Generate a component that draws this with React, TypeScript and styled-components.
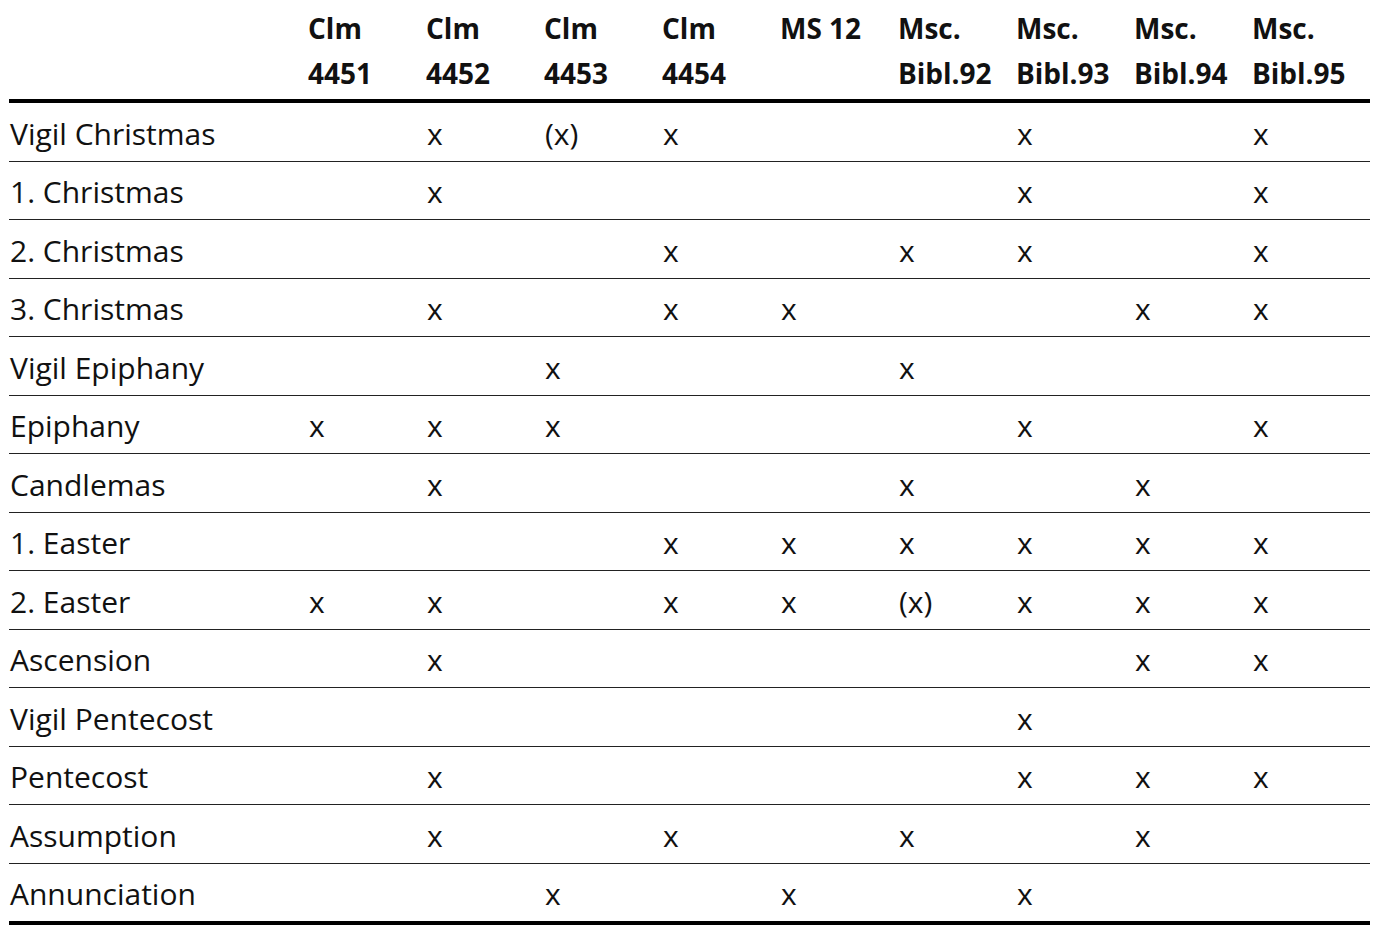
import React from "react";
import styled, { createGlobalStyle } from "styled-components";

const GlobalStyle = createGlobalStyle`
    body {
        margin: 0;
        background: #ffffff;
        color: #111111;
        font-family: "Open Sans", "Noto Sans", sans-serif;
    }
`;

const columns = [
    ["Clm", "4451"],
    ["Clm", "4452"],
    ["Clm", "4453"],
    ["Clm", "4454"],
    ["MS 12", ""],
    ["Msc.", "Bibl.92"],
    ["Msc.", "Bibl.93"],
    ["Msc.", "Bibl.94"],
    ["Msc.", "Bibl.95"],
];

// 9 cells per feast: "" = empty, "x", "(x)"
const feasts: [string, string[]][] = [
    ["Vigil Christmas", ["", "x", "(x)", "x", "", "", "x", "", "x"]],
    ["1. Christmas", ["", "x", "", "", "", "", "x", "", "x"]],
    ["2. Christmas", ["", "", "", "x", "", "x", "x", "", "x"]],
    ["3. Christmas", ["", "x", "", "x", "x", "", "", "x", "x"]],
    ["Vigil Epiphany", ["", "", "x", "", "", "x", "", "", ""]],
    ["Epiphany", ["x", "x", "x", "", "", "", "x", "", "x"]],
    ["Candlemas", ["", "x", "", "", "", "x", "", "x", ""]],
    ["1. Easter", ["", "", "", "x", "x", "x", "x", "x", "x"]],
    ["2. Easter", ["x", "x", "", "x", "x", "(x)", "x", "x", "x"]],
    ["Ascension", ["", "x", "", "", "", "", "", "x", "x"]],
    ["Vigil Pentecost", ["", "", "", "", "", "", "x", "", ""]],
    ["Pentecost", ["", "x", "", "", "", "", "x", "x", "x"]],
    ["Assumption", ["", "x", "", "x", "", "x", "", "x", ""]],
    ["Annunciation", ["", "", "x", "", "x", "", "x", "", ""]],
];

const Page = styled.div`
    padding: 6px 0 0 9px;
`;

const Table = styled.table`
    width: 1361px;
    border-collapse: collapse;
    table-layout: fixed;
    border-bottom: 4px solid #000;
`;

const HeadCell = styled.th`
    text-align: left;
    font-size: 28px;
    font-weight: 700;
    line-height: 45px;
    padding: 0 0 3px 0;
    vertical-align: bottom;
    border-bottom: 4px solid #000;
    white-space: nowrap;
`;

const Row = styled.tr<{ $last?: boolean }>`
    border-bottom: ${(p) => (p.$last ? "none" : "1px solid #222")};
`;

const Cell = styled.td`
    height: 53.5px;
    padding: 4px 0 0 1px;
    font-size: 30px;
    font-weight: 500;
    line-height: 40px;
    vertical-align: middle;
    white-space: nowrap;
`;

const App = () => {
    return (
        <>
            <GlobalStyle />
            <Page>
                <Table>
                    <colgroup>
                        <col style={{ width: 299 }} />
                        {columns.map((_, i) => (
                            <col key={i} style={{ width: 118 }} />
                        ))}
                    </colgroup>
                    <thead>
                        <tr>
                            <HeadCell />
                            {columns.map(([a, b], i) => (
                                <HeadCell key={i}>
                                    {a}
                                    <br />
                                    {b || "\u00a0"}
                                </HeadCell>
                            ))}
                        </tr>
                    </thead>
                    <tbody>
                        {feasts.map(([name, marks], r) => (
                            <Row key={name} $last={r === feasts.length - 1}>
                                <Cell>{name}</Cell>
                                {marks.map((m, i) => (
                                    <Cell key={i}>{m}</Cell>
                                ))}
                            </Row>
                        ))}
                    </tbody>
                </Table>
            </Page>
        </>
    );
};

export default App;
